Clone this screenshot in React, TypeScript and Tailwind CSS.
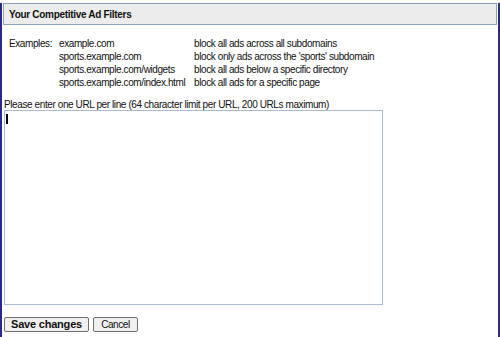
import React from 'react';

const examples = [
  ['example.com', 'block all ads across all subdomains'],
  ['sports.example.com', "block only ads across the 'sports' subdomain"],
  ['sports.example.com/widgets', 'block all ads below a specific directory'],
  ['sports.example.com/index.html', 'block all ads for a specific page'],
];

export default function App() {
  return (
    <div
      className="w-[500px] h-[337px] bg-white border-x-2 border-b-2 border-[#2a2a86] text-[10px] tracking-[-0.4px] text-[#111] relative"
      style={{ fontFamily: '"Liberation Sans", Arial, sans-serif' }}
    >
      <div className="mx-[1px] mt-[3px] h-[22px] border border-[#8aa4c0] bg-[#ececec] flex items-center pl-[5px]">
        <h1 className="font-bold text-[10px] tracking-[-0.3px]">Your Competitive Ad Filters</h1>
      </div>

      <div className="grid grid-cols-[50px_135px_auto] pl-[7px] mt-[12px] leading-[13px]">
        {examples.map(([url, desc], i) => (
          <React.Fragment key={url}>
            <span>{i === 0 ? 'Examples:' : ''}</span>
            <span>{url}</span>
            <span>{desc}</span>
          </React.Fragment>
        ))}
      </div>

      <p className="pl-[2px] mt-[10px] leading-[11px]">
        Please enter one URL per line (64 character limit per URL, 200 URLs maximum)
      </p>

      <div className="relative ml-[2px] w-[379px] h-[195px] border border-[#a9bcd3] bg-white">
        <div className="absolute left-[1px] top-[3px] w-[2px] h-[10px] bg-black" />
      </div>

      <div className="flex gap-[4px] pl-[2px] mt-[12px]">
        <button className="h-[15px] w-[85px] border border-[#707070] rounded-[2px] bg-[#f0f0f0] font-bold text-[11px] tracking-[-0.2px] leading-none">
          Save changes
        </button>
        <button className="h-[15px] w-[45px] border border-[#707070] rounded-[2px] bg-[#f0f0f0] text-[10px] leading-none">
          Cancel
        </button>
      </div>
    </div>
  );
}
